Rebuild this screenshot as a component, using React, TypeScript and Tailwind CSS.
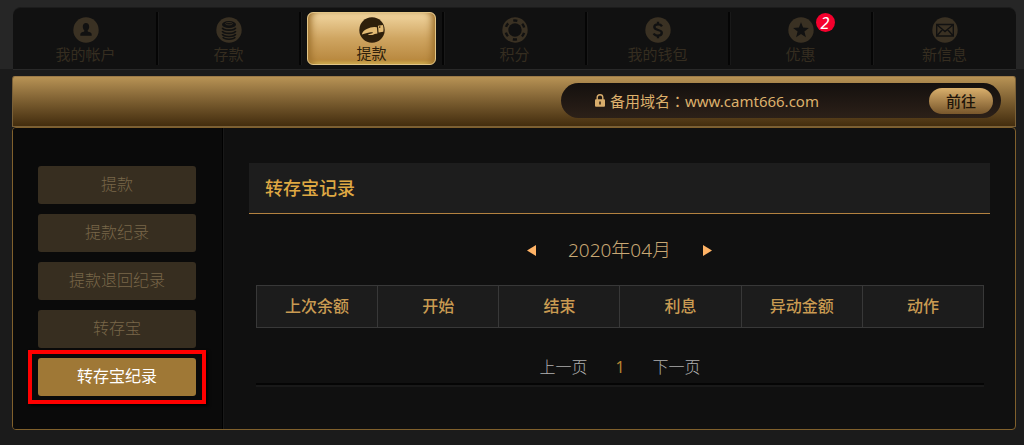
import type { ReactNode } from 'react';

function Disc({ children, dark = false }: { children: ReactNode; dark?: boolean }) {
  return (
    <svg viewBox="0 0 26 26" className="size-[26px]" aria-hidden="true">
      <circle cx="13" cy="13" r="12.7" fill={dark ? '#2e1f0b' : '#3a3123'} />
      {children}
    </svg>
  );
}

const ink = '#111111';

const icons: Record<string, ReactNode> = {
  account: (
    <Disc>
      <path
        fill={ink}
        d="M13 6c2 0 3.200 1.500 3.200 3.700 0 1.500-.6 2.800-1.500 3.600v1c0 .5 3 1 3.700 2 .3.600.3 1.700.3 2.500H7.300c0-.8 0-1.900.3-2.500.7-1 3.700-1.500 3.700-2v-1c-.9-.8-1.500-2.100-1.500-3.600C9.800 7.500 11 6 13 6z"
      />
    </Disc>
  ),
  deposit: (
    <Disc>
      <ellipse cx="13" cy="7.500" rx="7" ry="3.600" fill={ink} />
      <ellipse cx="13" cy="6.700" rx="3.600" ry="1.200" fill="none" stroke="#3a3123" strokeWidth="0.9" />
      <path
        fill="none"
        stroke={ink}
        strokeWidth="1.700"
        d="M6.300 10.700c1 3.200 12.400 3.200 13.400 0M6.300 13.900c1 3.200 12.400 3.200 13.400 0M6.300 17.100c1 3.200 12.400 3.200 13.400 0M6.800 20.200c1.500 2.700 10.900 2.700 12.400 0"
      />
    </Disc>
  ),
  withdraw: (
    <Disc dark>
      <path
        fill="#e2b972"
        d="M2.800 17.600c.6-2.600 2.200-4.800 5-5.700 2.600-.9 5.300-1.900 7.800-1.800l2.300.1.500 6.300c-2 .1-3.300 1.100-5 1.400-1.900.3-3.800-.1-4.700-.5l2.800-.7c1.200-.3 2.600-.7 2.300-1.300-.3-.6-4.300.3-5.700.5-2 .3-3.600.8-5.300 1.700z"
      />
      <path fill="#e2b972" d="M19 8.800l4.800-.9c.8 2 .9 4.600.5 6.900l-4.700.7z" />
      <circle cx="20.700" cy="10.100" r=".8" fill="#2e1f0b" />
    </Disc>
  ),
  points: (
    <Disc>
      <circle cx="13" cy="13" r="6.700" fill={ink} />
      <circle
        cx="13"
        cy="13"
        r="9.500"
        fill="none"
        stroke={ink}
        strokeWidth="2.400"
        strokeDasharray="4.200 5.748"
        strokeDashoffset="7.074"
      />
    </Disc>
  ),
  wallet: (
    <Disc>
      <path
        fill="none"
        stroke={ink}
        strokeWidth="2.300"
        d="M17 9.300c-.8-1.300-2.300-1.900-4-1.900-2.200 0-3.700 1-3.700 2.700 0 4 7.500 1.800 7.500 5.700 0 1.800-1.600 2.900-3.800 2.900-1.900 0-3.500-.7-4.300-2.200M13 4.800v2.800M13 18.500v2.800"
      />
    </Disc>
  ),
  promo: (
    <Disc>
      <path
        fill={ink}
        d="M13 5.200l2.100 5.400 5.800.3-4.500 3.700 1.500 5.600-4.900-3.100-4.900 3.100 1.500-5.600-4.500-3.700 5.800-.3z"
      />
    </Disc>
  ),
  message: (
    <Disc>
      <path
        fill="none"
        stroke={ink}
        strokeWidth="1.400"
        d="M4.700 7.500h16.600v11.500H4.700zM4.700 7.500L13 14.500l8.300-7M4.700 19l5.800-6.500M21.300 19l-5.800-6.500"
      />
    </Disc>
  ),
};

const navItems = [
  { key: 'account', label: '我的帐户' },
  { key: 'deposit', label: '存款' },
  { key: 'withdraw', label: '提款', active: true },
  { key: 'points', label: '积分' },
  { key: 'wallet', label: '我的钱包' },
  { key: 'promo', label: '优惠', badge: 2 },
  { key: 'message', label: '新信息' },
];

const sideItems = ['提款', '提款纪录', '提款退回纪录', '转存宝', '转存宝纪录'];
const columns = ['上次余额', '开始', '结束', '利息', '异动金额', '动作'];

function TopNav() {
  return (
    <div className="bg-[#262626] px-2 pt-[7px] pl-[13px]">
      <nav className="grid h-[62px] grid-cols-7 rounded-t-lg border-t border-[#1c1c1c] bg-[#111111] pl-[2px] shadow-[0_1px_0_#292929]">
        {navItems.map((item, i) => (
          <div
            key={item.key}
            className={`my-1 ${i < navItems.length - 1 ? 'border-r-2 border-[#050505] shadow-[1px_0_0_#191919]' : ''}`}
          >
            <a
              href="#"
              className={
                item.active
                  ? 'mx-auto flex h-[53px] w-[129px] flex-col items-center rounded-md border border-[#e2c587] bg-linear-to-b from-[#f1d6a0] via-[#cfa561] via-50% to-[#b58439] pt-[4px] text-[#2e1f0b] shadow-[inset_7px_0_7px_-4px_#9b6e2b,inset_-7px_0_7px_-4px_#9b6e2b,inset_0_-3px_3px_-1px_#d9ba59]'
                  : 'flex flex-col items-center pt-[5px] text-[#352d20]'
              }
            >
              <span className="relative">
                {icons[item.key]}
                {item.badge && (
                  <span className="absolute -top-1 left-7 flex size-[19px] items-center justify-center rounded-full bg-[#f5002d] text-base leading-none text-white italic">
                    {item.badge}
                  </span>
                )}
              </span>
              <span className={`text-[15px] ${item.active ? 'leading-5' : 'leading-[22px]'}`}>{item.label}</span>
            </a>
          </div>
        ))}
      </nav>
    </div>
  );
}

function DomainBar() {
  return (
    <header className="flex h-[51px] items-start justify-end rounded-t-[3px] border border-[#7a6037] border-t-[#9c7a48] bg-linear-to-b from-[#b89355] to-[#432d0e] pt-[6px] pr-[14px]">
      <div className="flex h-[35px] w-[440px] items-center rounded-full bg-linear-to-b from-[#14100e] to-[#2c2018] pr-2 pl-[34px]">
        <svg viewBox="0 0 10 13" className="mr-[5px] h-[13px] w-[10px]" aria-hidden="true">
          <path d="M2.200 6V3.500a2.800 2.800 0 015.600 0V6" fill="none" stroke="#d9ad6c" strokeWidth="1.400" />
          <rect y="5.300" width="10" height="7.500" rx="1" fill="#d9ad6c" />
          <path d="M5 7.500v3" stroke="#2a1c0e" strokeWidth="1.500" />
        </svg>
        <p className="text-[15px] leading-[22px] text-[#dcb06c]">
          备用域名
          <span lang="zh-TW" className="font-['Noto_Sans_CJK_TC',sans-serif] leading-none">
            ：
          </span>
          www.camt666.com
        </p>
        <button
          type="button"
          className="ml-auto h-[26px] w-16 rounded-full bg-linear-to-b from-[#dab06c] to-[#78572c] text-[15px] leading-[26px] font-medium text-[#20150a]"
        >
          前往
        </button>
      </div>
    </header>
  );
}

function SideMenu() {
  return (
    <aside className="w-[210px] shrink-0 border-r border-black bg-[#0a0a0a] pt-[38px] pr-[26px] pl-[25px]">
      <ul className="flex flex-col gap-[10px]">
        {sideItems.map((label, i) => {
          const active = i === sideItems.length - 1;
          return (
            <li key={label} className="relative">
              <a
                href="#"
                className={`block h-[38px] rounded-[3px] text-center text-base leading-9 ${
                  active ? 'bg-[#9f7836] text-white' : 'bg-[#372e20] font-light text-[#796749]'
                }`}
              >
                {label}
              </a>
              {active && (
                <span className="pointer-events-none absolute -inset-x-[10px] -inset-y-2 border-4 border-[#ff0000] shadow-[2px_2px_3px_#000000]" />
              )}
            </li>
          );
        })}
      </ul>
    </aside>
  );
}

function Records() {
  return (
    <main className="min-w-0 flex-1 border-l border-[#191919] pt-[35px] pr-[25px] pb-[44px] pl-[25px]">
      <h1 className="h-[51px] border-b border-[#b38240] bg-[#1d1d1d] px-4 text-lg leading-[50px] font-medium text-[#dfa843]">
        转存宝记录
      </h1>
      <div className="mt-[22px] flex items-center justify-center gap-8">
        <button type="button" aria-label="上个月">
          <svg viewBox="0 0 9 11" className="h-[11px] w-[9px]">
            <path d="M9 0v11L0 5.500z" fill="#ffb366" />
          </svg>
        </button>
        <span className="text-[19px] leading-7 font-light text-[#c9a874]">2020年04月</span>
        <button type="button" aria-label="下个月">
          <svg viewBox="0 0 9 11" className="h-[11px] w-[9px]">
            <path d="M0 0v11l9-5.500z" fill="#ffb366" />
          </svg>
        </button>
      </div>
      <div className="mr-[6px] ml-[7px] border-b-2 border-[#050505] pt-[21px] shadow-[0_2px_0_#191919]">
        <table className="w-full table-fixed border-collapse bg-[#1c1c1c]">
          <thead>
            <tr>
              {columns.map((name) => (
                <th
                  key={name}
                  scope="col"
                  className="h-[42px] border border-[#383838] p-0 pb-[2px] text-base leading-6 font-medium text-[#c99b52]"
                >
                  {name}
                </th>
              ))}
            </tr>
          </thead>
        </table>
        <div className="flex h-[55px] items-end justify-center gap-7 pb-1 text-base leading-6 font-light text-[#b0b0b0]">
          <a href="#">上一页</a>
          <span className="font-normal text-[#b58432]">1</span>
          <a href="#">下一页</a>
        </div>
      </div>
    </main>
  );
}

export default function App() {
  return (
    <div className="min-h-screen bg-[#1b1b1b] pb-[14px] font-['Noto_Sans','Noto_Sans_CJK_SC',sans-serif]" lang="zh-CN">
      <TopNav />
      <div className="mt-[7px] mr-2 ml-3">
        <DomainBar />
        <div className="flex min-h-[303px] overflow-hidden rounded-[4px] border border-[#80602c] bg-[#101010]">
          <SideMenu />
          <Records />
        </div>
      </div>
    </div>
  );
}
